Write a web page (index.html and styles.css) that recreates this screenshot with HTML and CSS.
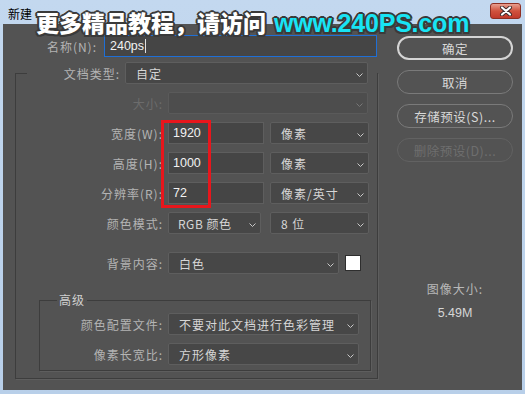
FILE: index.html
```html
<!DOCTYPE html>
<html lang="zh-CN">
<head>
  <meta charset="UTF-8">
  <title>新建</title>
  <link rel="stylesheet" href="styles.css">
</head>
<body>
<div class="window">
  <div class="titlebar">
    <span class="title">新建</span>
    <button class="close">
      <svg width="14" height="10" viewBox="0 0 14 10"><path d="M3 1.5 L11 8.5 M11 1.5 L3 8.5" stroke="#3a2a2a" stroke-width="4" stroke-linecap="round"/><path d="M3 1.5 L11 8.5 M11 1.5 L3 8.5" stroke="#fff" stroke-width="2.2" stroke-linecap="round"/></svg>
    </button>
  </div>

  <!-- 水印 -->
  <div class="watermark">更多精品教程，请访问<span class="url">www.240PS.com</span></div>
  <!-- 红框标注 -->
  <div class="mark"></div>

  <div class="client">
    <div class="form">
      <div class="row row-name">
        <label class="lbl lbl-name">名称(N):</label>
        <div class="field field-active">240ps<span class="caret"></span></div>
      </div>

      <fieldset class="group">
        <legend class="group-head">
          <label class="lbl lbl-type">文档类型:</label>
          <div class="select sel-type">自定<svg class="chev" width="7" height="4" viewBox="0 0 7 4"><path d="M0.5 0.5 L3.5 3.5 L6.5 0.5" fill="none" stroke="#c8c8c8"/></svg></div>
        </legend>

        <div class="row first">
          <label class="lbl off">大小:</label>
          <div class="select sel-full off-box"><svg class="chev" width="7" height="4" viewBox="0 0 7 4"><path d="M0.5 0.5 L3.5 3.5 L6.5 0.5" fill="none" stroke="#777"/></svg></div>
        </div>
        <div class="row">
          <label class="lbl">宽度(W):</label>
          <div class="field field-num">1920</div>
          <div class="select sel-unit">像素<svg class="chev" width="7" height="4" viewBox="0 0 7 4"><path d="M0.5 0.5 L3.5 3.5 L6.5 0.5" fill="none" stroke="#c8c8c8"/></svg></div>
        </div>
        <div class="row">
          <label class="lbl">高度(H):</label>
          <div class="field field-num">1000</div>
          <div class="select sel-unit">像素<svg class="chev" width="7" height="4" viewBox="0 0 7 4"><path d="M0.5 0.5 L3.5 3.5 L6.5 0.5" fill="none" stroke="#c8c8c8"/></svg></div>
        </div>
        <div class="row">
          <label class="lbl">分辨率(R):</label>
          <div class="field field-num">72</div>
          <div class="select sel-unit">像素/英寸<svg class="chev" width="7" height="4" viewBox="0 0 7 4"><path d="M0.5 0.5 L3.5 3.5 L6.5 0.5" fill="none" stroke="#c8c8c8"/></svg></div>
        </div>
        <div class="row">
          <label class="lbl">颜色模式:</label>
          <div class="select sel-mode">RGB 颜色<svg class="chev" width="7" height="4" viewBox="0 0 7 4"><path d="M0.5 0.5 L3.5 3.5 L6.5 0.5" fill="none" stroke="#c8c8c8"/></svg></div>
          <div class="select sel-unit">8 位<svg class="chev" width="7" height="4" viewBox="0 0 7 4"><path d="M0.5 0.5 L3.5 3.5 L6.5 0.5" fill="none" stroke="#c8c8c8"/></svg></div>
        </div>
        <div class="row row-bg">
          <label class="lbl">背景内容:</label>
          <div class="select sel-bg">白色<svg class="chev" width="7" height="4" viewBox="0 0 7 4"><path d="M0.5 0.5 L3.5 3.5 L6.5 0.5" fill="none" stroke="#c8c8c8"/></svg></div>
          <div class="swatch"></div>
        </div>

        <fieldset class="group group-adv">
          <legend class="adv-head">高级</legend>
          <div class="row first-adv">
            <label class="lbl lbl-adv">颜色配置文件:</label>
            <div class="select sel-adv">不要对此文档进行色彩管理<svg class="chev" width="7" height="4" viewBox="0 0 7 4"><path d="M0.5 0.5 L3.5 3.5 L6.5 0.5" fill="none" stroke="#c8c8c8"/></svg></div>
          </div>
          <div class="row">
            <label class="lbl lbl-adv">像素长宽比:</label>
            <div class="select sel-adv">方形像素<svg class="chev" width="7" height="4" viewBox="0 0 7 4"><path d="M0.5 0.5 L3.5 3.5 L6.5 0.5" fill="none" stroke="#c8c8c8"/></svg></div>
          </div>
        </fieldset>
      </fieldset>
    </div>

    <div class="side">
      <button class="btn btn-default">确定</button>
      <button class="btn">取消</button>
      <button class="btn">存储预设(S)...</button>
      <button class="btn btn-off">删除预设(D)...</button>
      <div class="size-info">
        <div class="size-label">图像大小:</div>
        <div class="size-value">5.49M</div>
      </div>
    </div>
  </div>
</div>
</body>
</html>
```

FILE: styles.css
```css
body {
  margin: 0;
  font-family: "Noto Sans CJK SC", "Liberation Sans", sans-serif;
  background-color: #bcd3ec;
}
.window {
  position: relative;
  width: 525px;
  height: 394px;
  background: linear-gradient(to bottom, #c3d8ef, #b8cfe9);
  overflow: hidden;
}
.titlebar {
  height: 24px;
  display: flex;
  justify-content: space-between;
  align-items: center;
  padding: 0 4px 0 8px;
  box-sizing: border-box;
}
.title {
  font-size: 12px;
  color: #000;
  margin-top: 2px;
}
.close {
  width: 31px;
  height: 16px;
  margin-top: -2px;
  border: 1px solid #8e2f23;
  border-radius: 3px;
  background: linear-gradient(to bottom, #e8a090, #d0523d 50%, #c0392b);
  display: flex;
  justify-content: center;
  align-items: center;
  padding: 0;
}
.watermark {
  position: absolute;
  left: 36px;
  top: 7px;
  font-size: 23px;
  font-weight: 900;
  color: #fff;
  line-height: 30px;
  white-space: nowrap;
  text-shadow: 2px 0 0 #3a3a3a, -2px 0 0 #3a3a3a, 0 2px 0 #3a3a3a, 0 -2px 0 #3a3a3a,
    1.5px 1.5px 0 #3a3a3a, -1.5px -1.5px 0 #3a3a3a, 1.5px -1.5px 0 #3a3a3a, -1.5px 1.5px 0 #3a3a3a;
}
.watermark .url {
  font-family: "Liberation Sans", sans-serif;
  font-weight: 700;
  font-size: 25px;
  color: #18e4f4;
  margin-left: 8px;
  letter-spacing: -0.2px;
}
.mark {
  position: absolute;
  left: 161px;
  top: 120px;
  width: 50px;
  height: 88px;
  border: 3px solid #e8161c;
  box-sizing: border-box;
}
.client {
  margin: 0 3px;
  height: 366px;
  background-color: #535353;
  display: flex;
  padding-top: 11px;
  box-sizing: border-box;
}
.form {
  width: 375px;
}
.row {
  display: flex;
  align-items: center;
  margin-top: 8px;
}
.row-name {
  margin-top: 0;
}
.lbl {
  width: 147px;
  margin-right: 5px;
  text-align: right;
  font-size: 12px;
  letter-spacing: 1px;
  color: #b4b4b4;
  white-space: nowrap;
}
.lbl.off {
  color: #6c6c6c;
}
.lbl-name {
  width: 94px;
  margin-right: 7px;
}
.lbl-type {
  width: 93px;
  margin-right: 5px;
}
.lbl-adv {
  width: 123px;
}
.field,
.select {
  height: 22px;
  box-sizing: border-box;
  display: flex;
  align-items: center;
  font-size: 12px;
  color: #d6d6d6;
  background-color: #474747;
  border: 1px solid #5e5e5e;
}
.field {
  font-family: "Liberation Sans", sans-serif;
  font-size: 12.5px;
  color: #f2f2f2;
  padding-left: 4px;
  background-color: #454545;
}
.field-active {
  width: 273px;
  border-color: #1f6fd6;
  padding-left: 5px;
}
.caret {
  width: 1px;
  height: 14px;
  background-color: #e0e0e0;
  margin-left: 1px;
}
.field-num {
  width: 96px;
  margin-right: 6px;
}
.select {
  padding: 0 4px 0 10px;
  border-radius: 2px;
  letter-spacing: 1px;
}
.chev {
  margin-left: auto;
  margin-top: 3px;
}
.off-box {
  background-color: #4d4d4d;
  border-color: #5a5a5a;
}
.sel-type {
  width: 243px;
}
.sel-full {
  width: 200px;
}
.sel-unit {
  width: 99px;
}
.sel-mode {
  width: 93px;
  margin-right: 9px;
  padding-left: 9px;
  letter-spacing: 0.5px;
}
.sel-bg {
  width: 171px;
}
.sel-adv {
  width: 191px;
}
.row-bg {
  margin-top: 18px;
}
.swatch {
  width: 16px;
  height: 16px;
  box-sizing: border-box;
  margin-left: 6px;
  background-color: #fff;
  border: 1px solid #2e2e2e;
}
.group {
  margin: 5px 0 0 12px;
  padding: 0 0 7px 0;
  width: 363px;
  box-sizing: border-box;
  border: 1px solid #3d3d3d;
  box-shadow: 1px 1px 0 #5e5e5e;
  min-inline-size: 0;
}
.group-head {
  display: flex;
  align-items: center;
  padding: 0 9px 0 0;
  margin-left: 11px;
}
.group-adv {
  margin: 19px 0 0 23px;
  width: 332px;
  padding: 0 0 5px 0;
}
.adv-head {
  font-size: 12px;
  line-height: 14px;
  letter-spacing: 1px;
  color: #d0d0d0;
  padding: 0 2px;
  margin-left: 17px;
}
.first-adv {
  margin-top: 6px;
}
.side {
  width: 116px;
  margin-left: 19px;
  padding-top: 1px;
  display: flex;
  flex-direction: column;
  gap: 10px;
}
.btn {
  height: 24px;
  border: 1px solid #7a7a7a;
  border-radius: 12px;
  background-color: #535353;
  color: #d8d8d8;
  font-family: "Noto Sans CJK SC", "Liberation Sans", sans-serif;
  font-size: 12.5px;
  letter-spacing: 0.5px;
  padding: 0;
}
.btn-default {
  border: 2px solid #d4d4d4;
}
.btn-off {
  border-color: #626262;
  color: #6e6e6e;
}
.size-info {
  margin-top: 108px;
  text-align: center;
}
.size-label {
  font-size: 12px;
  letter-spacing: 1px;
  color: #b8b8b8;
}
.size-value {
  margin-top: 9px;
  font-family: "Liberation Sans", sans-serif;
  font-size: 12.5px;
  color: #d6d6d6;
}
```
